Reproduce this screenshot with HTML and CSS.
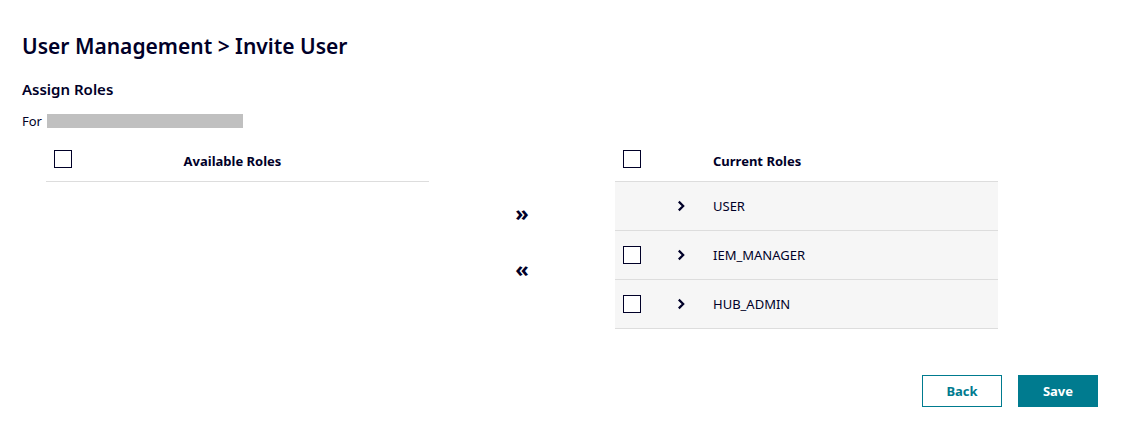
FILE: index.html
```html
<!DOCTYPE html>
<html>
<head>
<meta charset="utf-8">
<link rel="stylesheet" href="styles.css">
</head>
<body>
<div class="page">
  <h1 class="title">User Management &gt; Invite User</h1>
  <h2 class="subtitle">Assign Roles</h2>
  <div class="for-row"><span>For</span><span class="redacted"></span></div>
  <div class="tables">
    <div class="table table-left">
      <div class="head">
        <div class="cell-check"><span class="checkbox"></span></div>
        <div class="head-label center">Available Roles</div>
      </div>
    </div>
    <div class="arrows">
      <span class="arrow">&raquo;</span>
      <span class="arrow">&laquo;</span>
    </div>
    <div class="table table-right">
      <div class="head">
        <div class="cell-check"><span class="checkbox"></span></div>
        <div class="cell-chev"></div>
        <div class="head-label">Current Roles</div>
      </div>
      <div class="row">
        <div class="cell-check"></div>
        <div class="cell-chev"><svg width="10" height="12" viewBox="0 0 10 12"><path d="M2.8 1.6 L7.2 6 L2.8 10.4" fill="none" stroke="#000028" stroke-width="2.2"/></svg></div>
        <div class="row-label">USER</div>
      </div>
      <div class="row">
        <div class="cell-check"><span class="checkbox"></span></div>
        <div class="cell-chev"><svg width="10" height="12" viewBox="0 0 10 12"><path d="M2.8 1.6 L7.2 6 L2.8 10.4" fill="none" stroke="#000028" stroke-width="2.2"/></svg></div>
        <div class="row-label">IEM_MANAGER</div>
      </div>
      <div class="row">
        <div class="cell-check"><span class="checkbox"></span></div>
        <div class="cell-chev"><svg width="10" height="12" viewBox="0 0 10 12"><path d="M2.8 1.6 L7.2 6 L2.8 10.4" fill="none" stroke="#000028" stroke-width="2.2"/></svg></div>
        <div class="row-label">HUB_ADMIN</div>
      </div>
    </div>
  </div>
  <div class="actions">
    <button class="btn btn-outline">Back</button>
    <button class="btn btn-primary">Save</button>
  </div>
</div>
</body>
</html>
```
FILE: styles.css
```css
* { box-sizing: border-box; }
body {
  margin: 0;
  font-family: "Noto Sans", "Open Sans", sans-serif;
  color: #000028;
  background: #fff;
}
.page {
  padding: 32px 27px 0 22px;
}
.title {
  margin: 0;
  font-size: 21px;
  font-weight: 600;
  line-height: 28px;
}
.subtitle {
  margin: 19px 0 0;
  font-size: 15px;
  font-weight: 600;
  line-height: 20px;
}
.for-row {
  display: flex;
  align-items: center;
  gap: 5px;
  margin-top: 13px;
  font-size: 13px;
  line-height: 18px;
}
.redacted {
  display: inline-block;
  width: 196px;
  height: 14px;
  background: #c0c0c0;
}
.tables {
  display: flex;
  align-items: flex-start;
  margin-top: 7px;
  padding-left: 24px;
}
.table { width: 383px; }
.head {
  display: flex;
  align-items: center;
  height: 45px;
  border-bottom: 1px solid #dddddd;
  font-size: 13px;
  font-weight: 700;
}
.head-label { padding-top: 4px; }
.cell-check {
  width: 48px;
  padding-left: 8px;
  display: flex;
  align-items: center;
}
.checkbox {
  display: inline-block;
  width: 18px;
  height: 18px;
  border: 1px solid #000028;
  background: #fff;
}
.head-label.center {
  flex: 1;
  text-align: center;
  padding-right: 58px;
}
.arrows {
  width: 186px;
  display: flex;
  flex-direction: column;
  align-items: center;
  gap: 32px;
  padding-top: 63px;
  font-size: 22px;
  font-weight: 700;
  line-height: 24px;
}
.cell-chev {
  width: 36px;
  display: flex;
  justify-content: center;
  align-items: center;
}
.row-label, .table-right .head-label { padding-left: 14px; }
.row {
  display: flex;
  align-items: center;
  height: 49px;
  background: #f6f6f6;
  border-bottom: 1px solid #dddddd;
  font-size: 13px;
}
.actions {
  display: flex;
  justify-content: flex-end;
  gap: 16px;
  margin-top: 46px;
}
.btn {
  width: 80px;
  height: 32px;
  font-family: inherit;
  font-size: 13px;
  font-weight: 700;
  border: 1px solid #007b8f;
  cursor: pointer;
}
.btn-outline { background: #fff; color: #007b8f; }
.btn-primary { background: #007b8f; color: #fff; }
```
